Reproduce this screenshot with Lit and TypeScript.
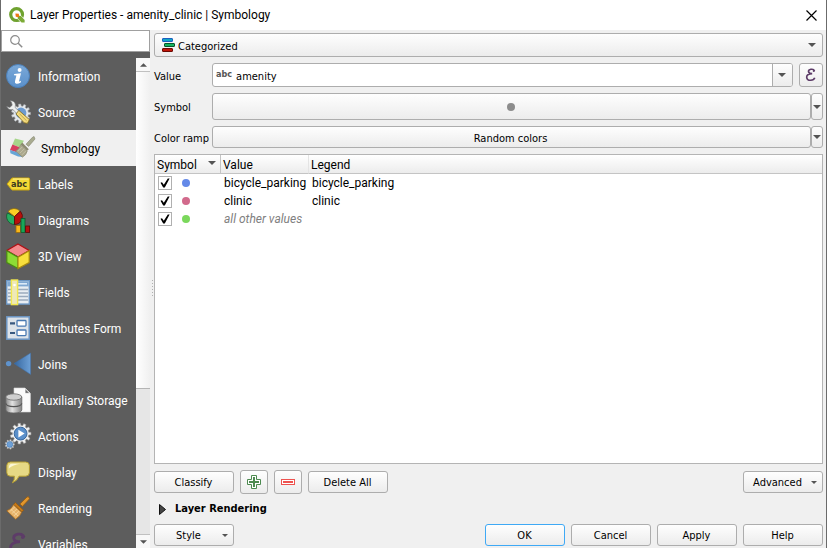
import { LitElement, html, svg, css } from "lit";
import { customElement, property, state } from "lit/decorators.js";
import { classMap } from "lit/directives/class-map.js";
import { styleMap } from "lit/directives/style-map.js";

const gear = (cx: number, cy: number, r: number, teeth: number) => {
  const pts: string[] = [];
  for (let i = 0; i < teeth; i++) {
    for (const [o, k] of [[-0.3, 0.78], [-0.2, 1], [0.2, 1], [0.3, 0.78]]) {
      const a = ((i + o) / teeth) * Math.PI * 2;
      pts.push(`${(cx + Math.cos(a) * r * k).toFixed(2)},${(cy + Math.sin(a) * r * k).toFixed(2)}`);
    }
  }
  return pts.join(" ");
};

const epsilon = svg`
  <path d="M18 5.2 Q16.8 1.4 11.8 2.2 Q7.2 3.2 7.8 6.4 Q8.4 9.6 14 9.6 Q4.6 10.2 4.6 15.6 Q4.8 21.4 11.6 21 Q17 20.6 18.4 16.6" fill="none" stroke="#5d3c68" stroke-width="2.8"/>
  <circle cx="16.8" cy="5.2" r="1.8" fill="#5d3c68"/>`;

const icons = {
  information: svg`
    <defs><linearGradient id="g" x1="0" y1="0" x2="0" y2="1"><stop offset="0" stop-color="#7ba9d8"/><stop offset="1" stop-color="#5a90cb"/></linearGradient></defs>
    <circle cx="12" cy="12" r="11.5" fill="url(#g)" stroke="#4b7fb8"/>
    <circle cx="13.6" cy="6" r="2" fill="#fff"/>
    <path d="M8.2 10 L15 9.2 L13 17.2 Q12.9 18.2 15 16.8 L14.7 18.4 Q11.8 20.4 9.8 19.6 Q8.6 18.9 9 17.2 L10.4 11.4 L8 11.2 Z" fill="#fff"/>`,
  source: svg`
    <polygon points="${gear(15, 13.5, 9.5, 11)}" fill="#e4e8ec" stroke="#a9adb0" stroke-width=".6"/>
    <circle cx="15" cy="13" r="5.4" fill="#6d9bd0"/>
    <path d="M4.2 .8 Q8.6 .6 9.4 4.4 Q9.6 6 9 7.4 L15 13 L12.6 15.4 L6.8 9.4 Q2.6 10.6 .6 6.6 L3.8 7.4 L6.2 5.2 L5.6 2.6 Z" fill="#eef0f0" stroke="#77797b" stroke-width=".6"/>
    <path d="M12.8 10.4 L23.4 19.6 L21.4 23.4 L18.2 22.8 L10 14 Z" fill="#f2da7c" stroke="#806a1e" stroke-width=".8"/>
    <path d="M13.5 13.8 L20.6 20.8" stroke="#b39b42" stroke-width=".8"/>`,
  symbology: svg`
    <path d="M6 2.4 L15 4.8 L10.6 11.2 L3.4 8.6 Z" fill="#a6d68a"/>
    <path d="M3.4 8.6 L10.6 11.2 L8.2 16.5 L1 14 Z" fill="#d6405f"/>
    <path d="M1 14 L9 16.4 L14 21 L9 20.6 L1.4 17.2 Z" fill="#66a5d6"/>
    <path d="M25 .4 L26 3 L19.6 10.4 L17 8.2 L23.2 1.6 Z" fill="#a9ab90" stroke="#83856f" stroke-width=".6"/>
    <path d="M13.2 6.6 L19.8 13.2 L18.2 14.8 L11.6 8.4 Z" fill="#8b8a70"/>
    <path d="M11.6 8.8 L18.2 15 Q17.4 19 13.4 21.2 L6.6 15 Q10.6 12.8 11.6 8.8 Z" fill="#aba88d" stroke="#85836a" stroke-width=".6"/>
    <path d="M9 15.2 L13.4 10.8 M11 17 L15.4 12.8 M13 18.8 L17 14.8" stroke="#cecbb1" stroke-width=".7"/>`,
  labels: svg`
    <path d="M1 12 L6 6 H23 Q23.6 6 23.6 7 V17.4 Q23.6 18 23 18 H6 Z" fill="#f4d936" stroke="#c9a50d"/>
    <path d="M7 7 H22.6" stroke="#fff29a"/>
    <text x="5" y="15" class="tag">abc</text>`,
  diagrams: svg`
    <path d="M8.5 8.5 L1.4 5 A8 8 0 0 0 8.5 16.5 Z" fill="#27ae60" stroke="#12572f" stroke-width=".8"/>
    <path d="M8.5 8.5 L2 3.4 A8 8 0 0 1 14 3 Z" fill="#fbd024" stroke="#8a6a10" stroke-width=".8"/>
    <path d="M8.5 8.5 L14.4 3.2 A8 8 0 0 1 8.5 16.5 Z" fill="#b8110c" stroke="#550b08" stroke-width=".8"/>
    <rect x="10" y="17.5" width="4.4" height="7" fill="#f8b71c" stroke="#9c6a08" stroke-width=".8"/>
    <rect x="15" y="10.5" width="4" height="14" fill="#18a558" stroke="#0c5a2f" stroke-width=".8"/>
    <rect x="19.6" y="18" width="4" height="6.4" fill="#b01010" stroke="#5a0808" stroke-width=".8"/>`,
  view3d: svg`
    <path d="M12 0 L23.2 6.4 L12 13 L.8 6.4 Z" fill="#f58a8c" stroke="#b00f14" stroke-width="1.2"/>
    <path d="M.8 6.8 L12 13.2 V24.6 L.8 18.6 Z" fill="#8ddc35" stroke="#4b8a14" stroke-width="1.2"/>
    <path d="M23.2 6.8 L12 13.2 V24.6 L23.2 18.6 Z" fill="#f8df3c" stroke="#a88b10" stroke-width="1.2"/>`,
  fields: svg`
    <rect x=".7" y=".7" width="22.6" height="23.4" fill="#e9eef3" stroke="#6c96c4" stroke-width="1.4"/>
    <rect x="1.4" y="1.4" width="21.2" height="5" fill="#7fa7d1"/>
    <rect x="12" y="3" width="9" height="1.6" fill="#dceaf7"/>
    <path d="M2 9.5 H22 M2 13 H22 M2 16.5 H22 M2 20 H22" stroke="#9aaabd" stroke-width="1.4"/>
    <rect x="5.4" y="0" width="6.2" height="24.6" fill="#eee9b8" stroke="#f1e74d" stroke-width="1.4"/>
    <circle cx="8.5" cy="5" r="1.3" fill="#fff"/>`,
  form: svg`
    <rect x=".8" y=".8" width="22.4" height="22.4" fill="#dde3e9" stroke="#6c96c4" stroke-width="1.5"/>
    <rect x="11" y="4.5" width="9" height="5.6" rx=".8" fill="#fff" stroke="#4a7ab2" stroke-width="1.3"/>
    <rect x="11" y="14" width="9" height="5.6" rx=".8" fill="#fff" stroke="#4a7ab2" stroke-width="1.3"/>
    <path d="M4 7.4 H9 M4 17 H9" stroke="#38587f" stroke-width="2.2"/>`,
  joins: svg`
    <defs><linearGradient id="j"><stop offset="0" stop-color="#35669f"/><stop offset="1" stop-color="#6da0d6"/></linearGradient></defs>
    <circle cx="2.6" cy="11.6" r="2.7" fill="#5f93cd"/>
    <path d="M8 11.6 L24.6 1 V22.4 Z" fill="url(#j)" stroke="#3c6ea8" stroke-width=".5"/>`,
  storage: svg`
    <defs><linearGradient id="s"><stop offset="0" stop-color="#8b8b8b"/><stop offset=".4" stop-color="#e3e3e3"/><stop offset="1" stop-color="#828282"/></linearGradient></defs>
    <path d="M8 0 H18.6 L24.4 5.6 V24 H8 Z" fill="#fafafa" stroke="#d6d6d6" stroke-width=".6"/>
    <path d="M19 .4 L24 5.4 H19 Z" fill="#6c6c6c" stroke="#fff" stroke-width=".8"/>
    <path d="M-.2 9 V22 Q.4 25 7.8 25 T15.8 22 V9 Z" fill="url(#s)" stroke="#646464" stroke-width=".8"/>
    <path d="M-.2 15.4 Q.4 18.6 7.8 18.6 T15.8 15.4" fill="none" stroke="#555" stroke-width="1.1"/>
    <ellipse cx="7.8" cy="9" rx="8" ry="3.2" fill="#cfcfcf" stroke="#6a6a6a" stroke-width=".8"/>`,
  actions: svg`
    <polygon points="${gear(14.6, 9.6, 10.4, 11)}" fill="#f2f2f2" stroke="#a8a8a8" stroke-width=".6"/>
    <circle cx="14.6" cy="9.6" r="6.4" fill="#5a8fca" stroke="#35659c"/>
    <path d="M12.4 5.8 L18.6 9.6 L12.4 13.4 Z" fill="#fff"/>
    <polygon points="${gear(3.8, 20.4, 4.8, 9)}" fill="#ededed" stroke="#909090" stroke-width=".5"/>
    <circle cx="3.8" cy="20.4" r="3" fill="#6ea0d6" stroke="#4478b0" stroke-width=".6"/>`,
  display: svg`
    <path d="M4.5 2 H19.5 Q23.4 2 23.4 5.6 V12.6 Q23.4 16.2 19.5 16.2 H13 Q11.8 20.4 6.4 22.8 Q8.8 19.6 8.4 16.2 H4.5 Q.8 16.2 .8 12.6 V5.6 Q.8 2 4.5 2 Z" fill="#e6d985" stroke="#b59e32"/>
    <path d="M2.8 8.4 Q2.6 4 6 3.8 H14 Q7 5 2.8 8.4 Z" fill="#fbf7d6"/>`,
  rendering: svg`
    <path d="M22.4 .6 L23.6 2.8 L16.4 10.4 L13.8 8 L21 1 Z" fill="#e2962c" stroke="#8f5812" stroke-width=".8"/>
    <path d="M9.4 6.6 L17.6 14.2 L15.8 16 L7.6 8.4 Z" fill="#c87a17" stroke="#8a5410" stroke-width=".6"/>
    <path d="M7.4 8.8 L15.6 16.2 Q14.6 20 9.6 23.2 L.8 14.8 Q5.8 13 7.4 8.8 Z" fill="#e8b46b" stroke="#a86b1d" stroke-width=".8"/>
    <path d="M3.6 15.6 L8.8 11 M5.8 17.6 L11 13 M8 19.8 L13 15.2 M5 13.4 L12 20" stroke="#f9dda8" stroke-width=".7"/>`,
  variables: epsilon,
};

type IconName = keyof typeof icons;

@customElement("arrow-mark")
class ArrowMark extends LitElement {
  static styles = css`
    :host { display: inline-block; width: 8px; height: 4px; pointer-events: none; }
    svg { display: block; width: 100%; height: 100%; }
  `;
  render() {
    return html`<svg viewBox="0 0 8 4" aria-hidden="true"><path d="M0 0 H8 L4 4 Z" fill="#545454" /></svg>`;
  }
}

@customElement("side-item")
class SideItem extends LitElement {
  @property() label = "";
  @property() icon: IconName = "information";
  @property({ type: Boolean, reflect: true }) selected = false;

  static styles = css`
    :host { display: block; flex: none; }
    .item {
      display: flex; align-items: center; gap: 8px; width: 100%; height: 36px; padding: 0 0 0 5px;
      border: 0; background: transparent; color: #fff; text-align: left; white-space: nowrap;
      font: 12px/16px Roboto, "Noto Sans", sans-serif;
    }
    .item.selected { background: #f0f0f0; color: #000; padding-left: 8px; }
    .icon { width: 24px; height: 24px; flex: none; overflow: visible; }
    .label { padding-top: 2px; }
    .tag { font: bold 9px "DejaVu Sans Condensed", sans-serif; fill: #3a3a20; }
  `;
  render() {
    return html`<button class=${classMap({ item: true, selected: this.selected })} aria-pressed=${this.selected}>
      <svg class="icon" viewBox="0 0 24 24" aria-hidden="true">${icons[this.icon]}</svg>
      <span class="label">${this.label}</span>
    </button>`;
  }
}

@customElement("app-root")
class AppRoot extends LitElement {
  @state() private page = "Symbology";

  private pages: [string, IconName][] = [
    ["Information", "information"], ["Source", "source"], ["Symbology", "symbology"], ["Labels", "labels"],
    ["Diagrams", "diagrams"], ["3D View", "view3d"], ["Fields", "fields"], ["Attributes Form", "form"],
    ["Joins", "joins"], ["Auxiliary Storage", "storage"], ["Actions", "actions"], ["Display", "display"],
    ["Rendering", "rendering"], ["Variables", "variables"],
  ];

  private categories = [
    { color: "#6489e8", value: "bicycle_parking", legend: "bicycle_parking", other: false },
    { color: "#d26a8c", value: "clinic", legend: "clinic", other: false },
    { color: "#7bd85c", value: "all other values", legend: "", other: true },
  ];

  static styles = css`
    :host {
      display: flex; flex-direction: column; height: 100vh; box-sizing: border-box; overflow: hidden;
      border: solid #6b6b6b; border-width: 0 1px; background: #f0f0f0; color: #000;
      font: 11px/16px "DejaVu Sans Condensed", "Noto Sans", sans-serif;
    }
    *, *::before { box-sizing: border-box; }
    button, input, select { font: inherit; color: inherit; margin: 0; }

    .titlebar { display: flex; align-items: center; flex: none; height: 30px; padding: 0 8px; background: #fff; }
    .title { flex: 1; margin: 0 0 0 5px; font: 12px/16px Roboto, "Noto Sans", sans-serif; white-space: nowrap; }
    .logo { width: 16px; height: 16px; }
    .close { display: grid; place-items: center; width: 14px; height: 24px; padding: 0; border: 0; background: none; }
    .close svg { width: 11px; height: 11px; }

    .body { display: flex; flex: 1; min-height: 0; }
    .side { display: flex; flex-direction: column; width: 149px; flex: none; background: #5d5d5d; }
    .search {
      display: flex; align-items: center; gap: 4px; flex: none; height: 22px; padding: 0 8px;
      border: 1px solid #a0a0a0; background: #fff;
    }
    .search svg { width: 13px; height: 13px; flex: none; }
    .search input { min-width: 0; flex: 1; border: 0; padding: 0; outline: 0; background: none; }
    .scroller { display: flex; flex: 1; min-height: 0; padding-top: 6px; }
    .pages { display: flex; flex-direction: column; flex: 1; min-width: 0; overflow: hidden; }
    .bar { display: flex; flex-direction: column; width: 14px; flex: none; background: #e6e6e6; }
    .bar arrow-mark { width: 7px; }
    .step { display: grid; place-items: center; height: 14px; padding: 0; border: 0; background: #f8f8f8; }
    .step.up { border-bottom: 1px solid #c0c0c0; }
    .step.up arrow-mark { rotate: 180deg; }
    .step.down { border-top: 1px solid #c0c0c0; }
    .thumb { flex: 317; border-bottom: 1px solid #b4b4b4; background: linear-gradient(90deg, #fff, #f0f0f0); }
    .rest { flex: 145; }

    .splitter { display: grid; place-items: center; width: 4px; flex: none; }
    .splitter i { width: 1px; height: 18px; background: repeating-linear-gradient(#b0b0b0 0 1px, #f0f0f0 1px 3px); }

    .main { display: flex; flex-direction: column; flex: 1; min-width: 0; padding: 3px 3px 2px 0; }
    .face { border: 1px solid #adadad; border-radius: 3px; background: linear-gradient(#fefefe, #ececec); padding: 0; }
    .combo { display: grid; grid-template: 24px / 1fr auto; align-items: center; flex: none; }
    .combo > * { grid-row: 1; }
    .combo select { grid-column: 1 / 3; width: 100%; height: 24px; padding: 3px 23px 0; appearance: none; outline: 0; }
    .combo .glyph { grid-column: 1; width: 13px; height: 14px; margin-left: 8px; pointer-events: none; z-index: 1; }
    .combo arrow-mark { grid-column: 2; margin-right: 7px; }

    .form { display: grid; grid-template: 24px 27px 22px / 52px 1fr; gap: 6px; align-items: stretch; margin-top: 6px; flex: none; }
    .form label { align-self: center; padding-top: 3px; white-space: nowrap; }
    .line { display: flex; min-width: 0; }
    .field { display: flex; flex: 1; min-width: 0; align-items: stretch; overflow: hidden; background: #fff; }
    .abc { align-self: center; margin-left: 3px; padding-bottom: 2px; color: #555; font: bold 9px/12px "DejaVu Sans Condensed", sans-serif; }
    .field input { flex: 1; min-width: 0; border: 0; outline: 0; padding: 3px 4px 0; background: none; }
    .drop { display: grid; place-items: center; width: 20px; padding: 0 2px 0 0; border: 0; border-left: 1px solid #adadad; background: linear-gradient(#fefefe, #ececec); }
    .expr { display: grid; place-items: center; width: 24px; margin-left: 6px; }
    .expr svg { width: 14px; height: 14px; }
    .wide { flex: 1; min-width: 0; display: grid; place-items: center; padding-right: 2px; }
    .wide.text { padding-top: 3px; }
    .narrow { width: 12px; display: grid; place-items: center; }
    .marker { width: 8px; height: 8px; border-radius: 50%; background: #8c8c8c; }

    .list { flex: 1; min-height: 0; margin-top: 6px; border: 1px solid #b4b4b4; background: #fff; }
    table { width: 100%; border-collapse: separate; border-spacing: 0; table-layout: fixed; font: 12px/16px Roboto, "Noto Sans", sans-serif; }
    th { height: 19px; padding: 2px 2px 0; border: solid #c4c4c4; border-width: 0 0 1px 1px; background: linear-gradient(#fff, #ececec); text-align: left; font-weight: normal; }
    th:first-child { border-left: 0; width: 65px; }
    th:nth-child(2) { width: 88px; }
    th:nth-child(3) { border-left-color: #e4e4e4; }
    .sort { display: flex; align-items: center; justify-content: space-between; }
    .sort arrow-mark { margin: 0 2px 4px 0; }
    td { height: 18px; padding: 0 3px; white-space: nowrap; }
    td:not(:first-child) { padding: 0 4px 1px; }
    .cell { display: flex; align-items: center; gap: 10px; height: 18px; }
    .cell input { appearance: none; display: grid; place-items: center; width: 14px; height: 14px; border: 1px solid #b0b0b0; background: #fff; }
    .cell input:checked::before { content: ""; width: 10px; height: 10px; background: #000; clip-path: polygon(5% 48%, 20% 42%, 38% 68%, 78% 4%, 96% 4%, 48% 96%, 32% 96%); }
    .dot { width: 8px; height: 8px; border-radius: 50%; }
    .other { color: #808080; font-style: italic; }

    .tools, .dialog { display: flex; align-items: center; gap: 6px; flex: none; }
    .tools { height: 24px; margin-top: 6px; }
    .push { width: 80px; height: 22px; padding: 1px 1px 0 0; }
    .push.menu { display: grid; grid-template-columns: 1fr 6px; align-items: center; padding: 1px 5px 0 0; }
    .push.menu arrow-mark { width: 6px; height: 3px; }
    .push.main-choice { border-color: #3fa9f5; }
    .square { display: grid; place-items: center; width: 28px; height: 24px; }
    .square svg { width: 16px; height: 16px; }
    .grow { flex: 1; }
    .group { display: flex; align-items: center; gap: 9px; flex: none; height: 16px; margin: 6px 0; padding: 2px 0 0 5px; border: 0; background: none; font: bold 11px/16px "DejaVu Sans Condensed", sans-serif; }
    .group svg { width: 7px; height: 11px; }
    .dialog { margin-top: 2px; }
  `;

  render() {
    return html`
      <header class="titlebar">
        <svg class="logo" viewBox="0 0 16 16" aria-hidden="true">
          <circle cx="7.6" cy="7.6" r="5.9" fill="none" stroke="#6fa22f" stroke-width="3.2" />
          <path d="M9 9 L15 15" stroke="#fff" stroke-width="5" />
          <path d="M8.6 8.6 L12 9 L15.6 13 V15.6 H12.6 L8.8 11.8 Z" fill="#7cab36" />
          <path d="M6.4 6.4 L9.8 6.8 L10.2 10.2 L6.8 9.8 Z" fill="#ee7913" />
        </svg>
        <h1 class="title">Layer Properties - amenity_clinic | Symbology</h1>
        <button class="close" aria-label="Close">
          <svg viewBox="0 0 11 11"><path d="M.5 .5 L10.5 10.5 M10.5 .5 L.5 10.5" stroke="#000" stroke-width="1.2" /></svg>
        </button>
      </header>
      <div class="body">
        <aside class="side">
          <div class="search">
            <svg viewBox="0 0 13 13" aria-hidden="true">
              <circle cx="5" cy="5" r="4.3" fill="none" stroke="#8c8c8c" stroke-width="1.2" />
              <path d="M8.2 8.2 L12.2 12.2" stroke="#8c8c8c" stroke-width="1.5" />
            </svg>
            <input type="text" aria-label="Search" />
          </div>
          <div class="scroller">
            <nav class="pages">
              ${this.pages.map(([label, icon]) => html`<side-item .label=${label} .icon=${icon}
                ?selected=${label === this.page} @click=${() => (this.page = label)}></side-item>`)}
            </nav>
            <div class="bar">
              <button class="step up" aria-label="Scroll up"><arrow-mark></arrow-mark></button>
              <div class="thumb"></div>
              <div class="rest"></div>
              <button class="step down" aria-label="Scroll down"><arrow-mark></arrow-mark></button>
            </div>
          </div>
        </aside>
        <div class="splitter"><i></i></div>
        <main class="main">
          <div class="combo">
            <svg class="glyph" viewBox="0 0 13 14" aria-hidden="true">
              <rect x=".5" y=".5" width="10" height="3" rx=".5" fill="#12a5c4" stroke="#1c5fc0" />
              <rect x="2.5" y="5.5" width="10" height="3" rx=".5" fill="#12b35e" stroke="#07552b" />
              <rect x=".5" y="10.5" width="10" height="3" rx=".5" fill="#c01408" stroke="#6b0a04" />
            </svg>
            <select class="face" aria-label="Renderer"><option>Categorized</option></select>
            <arrow-mark></arrow-mark>
          </div>
          <div class="form">
            <label for="value">Value</label>
            <div class="line">
              <div class="field face">
                <span class="abc">abc</span>
                <input id="value" type="text" value="amenity" />
                <button class="drop" aria-label="Choose field"><arrow-mark></arrow-mark></button>
              </div>
              <button class="expr face" aria-label="Expression"><svg viewBox="0 0 24 24">${epsilon}</svg></button>
            </div>
            <label for="symbol">Symbol</label>
            <div class="line">
              <button id="symbol" class="wide face"><span class="marker"></span></button>
              <button class="narrow face" aria-label="Symbol menu"><arrow-mark></arrow-mark></button>
            </div>
            <label for="ramp">Color ramp</label>
            <div class="line">
              <button id="ramp" class="wide text face">Random colors</button>
              <button class="narrow face" aria-label="Color ramp menu"><arrow-mark></arrow-mark></button>
            </div>
          </div>
          <div class="list">
            <table>
              <thead>
                <tr><th><div class="sort">Symbol<arrow-mark></arrow-mark></div></th><th>Value</th><th>Legend</th></tr>
              </thead>
              <tbody>
                ${this.categories.map((c) => html`<tr>
                  <td><div class="cell">
                    <input type="checkbox" checked aria-label=${c.value} />
                    <span class="dot" style=${styleMap({ background: c.color })}></span>
                  </div></td>
                  <td class=${classMap({ other: c.other })}>${c.value}</td>
                  <td>${c.legend}</td>
                </tr>`)}
              </tbody>
            </table>
          </div>
          <div class="tools">
            <button class="push face">Classify</button>
            <button class="square face" aria-label="Add">
              <svg viewBox="0 0 16 16"><path d="M5.5 1.5 H10.5 V5.5 H14.5 V10.5 H10.5 V14.5 H5.5 V10.5 H1.5 V5.5 H5.5 Z" fill="#fff" stroke="#4d8a50" stroke-width="1" /><path d="M8 3 V13 M3 8 H13" stroke="#4d8a50" stroke-width="2" /></svg>
            </button>
            <button class="square face" aria-label="Remove">
              <svg viewBox="0 0 16 16"><rect x="1.5" y="5.5" width="13" height="5" fill="#fff" stroke="#ee5350" /><path d="M3 8 H13" stroke="#ee5350" stroke-width="2" /></svg>
            </button>
            <button class="push face">Delete All</button>
            <span class="grow"></span>
            <button class="push menu face"><span>Advanced</span><arrow-mark></arrow-mark></button>
          </div>
          <button class="group" aria-expanded="false">
            <svg viewBox="0 0 7 11" aria-hidden="true"><path d="M.5 .5 L6.5 5.5 L.5 10.5 Z" fill="#444" stroke="#111" /></svg>Layer Rendering
          </button>
          <footer class="dialog">
            <button class="push menu face"><span>Style</span><arrow-mark></arrow-mark></button>
            <span class="grow"></span>
            <button class="push main-choice face">OK</button>
            <button class="push face">Cancel</button>
            <button class="push face">Apply</button>
            <button class="push face">Help</button>
          </footer>
        </main>
      </div>`;
  }
}
